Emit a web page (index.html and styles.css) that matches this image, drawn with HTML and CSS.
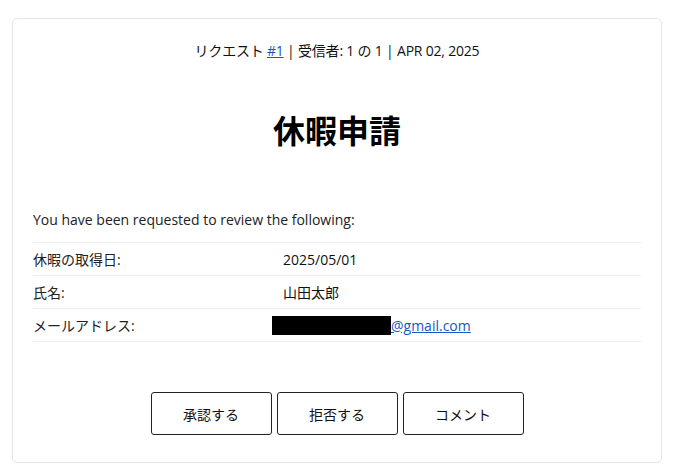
FILE: index.html
```html
<!DOCTYPE html>
<html lang="ja">
<head>
    <meta charset="UTF-8">
    <meta name="viewport" content="width=device-width, initial-scale=1.0">
    <title>休暇申請</title>
    <link rel="stylesheet" href="styles.css">
</head>
<body>
    <div class="card">
        <div class="meta">リクエスト <a href="#">#1</a> | 受信者: 1 の 1 | APR 02, 2025</div>
        <h1 class="title">休暇申請</h1>
        <p class="intro">You have been requested to review the following:</p>
        <div class="fields">
            <div class="row">
                <div class="label">休暇の取得日:</div>
                <div class="value">2025/05/01</div>
            </div>
            <div class="row">
                <div class="label">氏名:</div>
                <div class="value">山田太郎</div>
            </div>
            <div class="row">
                <div class="label">メールアドレス:</div>
                <div class="value mail"><span class="redact"></span><a href="#">@gmail.com</a></div>
            </div>
        </div>
        <div class="actions">
            <button>承認する</button>
            <button>拒否する</button>
            <button>コメント</button>
        </div>
    </div>
</body>
</html>
```

FILE: styles.css
```css
body {
    font-family: "Open Sans", "Noto Sans CJK JP", sans-serif;
    margin: 0;
    padding: 18px 12px 0 12px;
    background-color: #fff;
    color: #222;
    font-size: 14px;
}
.card {
    border: 1px solid #e6e6e6;
    border-radius: 5px;
    padding: 20px 20px 27px 20px;
}
.meta {
    text-align: center;
    line-height: 24px;
    color: #111;
    letter-spacing: -0.2px;
}
.meta a {
    color: #1a56c4;
}
.title {
    text-align: center;
    font-size: 32px;
    font-weight: bold;
    margin: 44px 0 53px 0;
    line-height: 48px;
    color: #000;
}
.intro {
    margin: 0 0 10px 0;
    line-height: 24px;
}
.row {
    display: flex;
    border-top: 1px solid #eee;
    height: 32px;
    align-items: center;
}
.row:last-child {
    border-bottom: 1px solid #eee;
}
.label {
    width: 250px;
}
.value {
    color: #111;
}
.mail {
    display: flex;
    align-items: center;
    margin-left: -11px;
}
.redact {
    display: inline-block;
    width: 119px;
    height: 19px;
    background-color: #000;
}
.mail a {
    color: #1a56c4;
}
.actions {
    display: flex;
    justify-content: center;
    gap: 5px;
    margin-top: 50px;
}
.actions button {
    width: 121px;
    height: 43px;
    background-color: #fff;
    border: 1px solid #222;
    border-radius: 3px;
    font-family: inherit;
    font-size: 14px;
    color: #111;
    cursor: pointer;
}
```
